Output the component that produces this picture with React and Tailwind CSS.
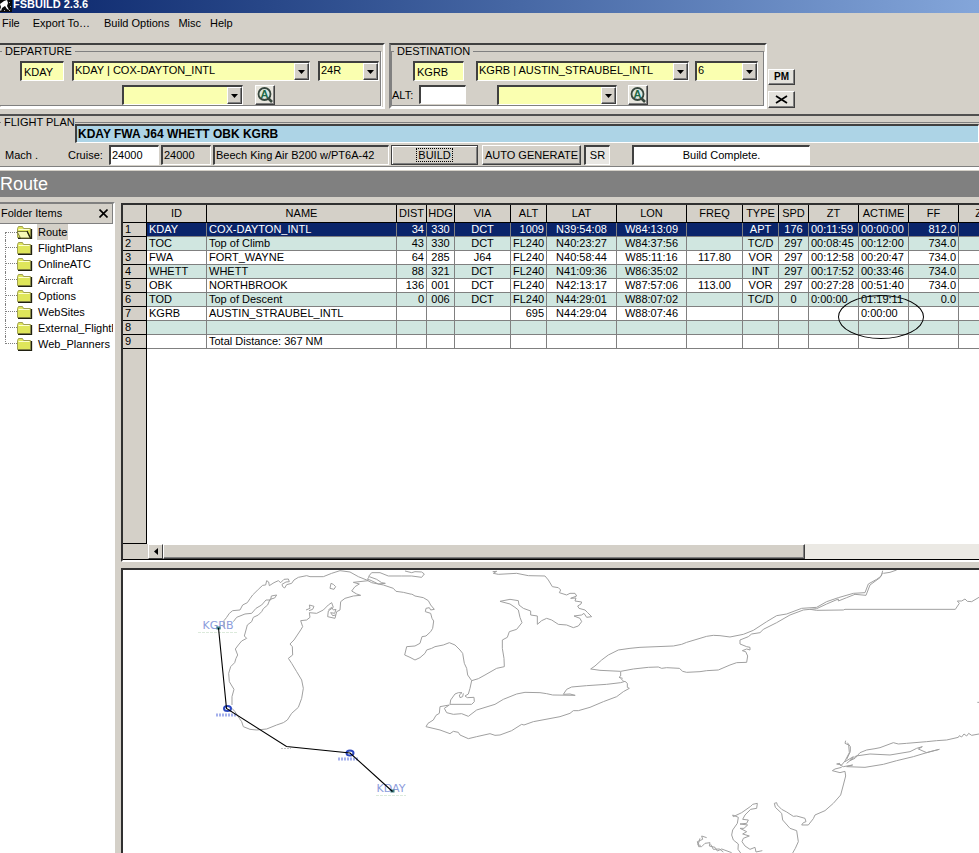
import React from "react";

const SUNKEN =
  "border-t-2 border-l-2 border-b border-r border-t-[#404040] border-l-[#404040] border-b-white border-r-white";
const RAISED =
  "border border-t-white border-l-white border-b-[#404040] border-r-[#404040]";

function Arrow() {
  return (
    <svg width="7" height="4" viewBox="0 0 7 4" aria-hidden="true">
      <path d="M0 0h7L3.5 4z" fill="#000" />
    </svg>
  );
}

function Combo({ label, value = "", className }) {
  return (
    <div className={`relative h-5 shrink-0 ${className}`}>
      <select
        aria-label={label}
        defaultValue={value}
        className={`block h-5 w-full appearance-none bg-[#faffb0] pr-4 pb-0.5 pl-px leading-[13px] ${SUNKEN}`}
      >
        <option value={value}>{value}</option>
      </select>
      <span
        className={`pointer-events-none absolute top-0.5 right-px flex h-[17px] w-[15px] items-center justify-center bg-[#d4d0c8] shadow-[inset_-1px_-1px_0_#808080] ${RAISED}`}
      >
        <Arrow />
      </span>
    </div>
  );
}

function Field({ className, ...rest }) {
  return <input type="text" className={`shrink-0 ${SUNKEN} ${className}`} {...rest} />;
}

function SearchButton({ label }) {
  return (
    <button type="button" aria-label={label} className={`h-5 w-5 shrink-0 bg-[#e8e6de] shadow-[inset_-1px_-1px_0_#808080] ${RAISED}`}>
      <svg width="18" height="18" viewBox="0 0 18 18" aria-hidden="true">
        <circle cx="8.5" cy="8" r="6" fill="#dce8e0" stroke="#38483e" strokeWidth="1.8" />
        <path d="M12.5 12.5l3.5 3.5" stroke="#38483e" strokeWidth="2.6" />
        <text x="8.5" y="12" textAnchor="middle" fontSize="11" fontWeight="700" fill="#1c6a48">A</text>
      </svg>
    </button>
  );
}

function Group({ title, className, children }) {
  return (
    <fieldset
      className={`min-w-0 grow border border-[#808080] shadow-[1px_1px_0_#fff] ${className}`}
    >
      <legend className="ml-0.5 h-[13px] px-[3px] leading-[13px]">{title}</legend>
      {children}
    </fieldset>
  );
}

function TitleBar() {
  return (
    <header className="flex h-[13px] items-start overflow-hidden bg-gradient-to-r from-[#0a246a] to-[#84a6da]">
      <svg width="12" height="13" viewBox="0 0 12 13" aria-hidden="true">
        <path d="M0 0h12v12H0z" fill="#0a0a0a" />
        <path d="M0 4l4-3 3-1 1 3-1 3 2 4-2-1-2-3-3 2-1 3-1-1 1-3z" fill="#fff" />
        <path d="M9 2h1v1H9zM10 6h1v1h-1zM4 10h1v1H4zM9 10h1v1H9z" fill="#aaa" />
      </svg>
      <h1 className="-mt-0.5 pl-px text-[11px] leading-[13px] font-bold whitespace-nowrap text-white">
        FSBUILD 2.3.6
      </h1>
    </header>
  );
}

function MenuBar() {
  return (
    <nav className="flex h-[30px] items-start gap-[13px] pt-1 pl-0.5 leading-[13px]">
      <button type="button">File</button>
      <button type="button">Export To…</button>
      <button type="button" className="ml-px">Build Options</button>
      <button type="button" className="-ml-1">Misc</button>
      <button type="button" className="-ml-1">Help</button>
    </nav>
  );
}

function Airports() {
  return (
    <div className="flex h-[71px] items-start">
      <section className="flex h-[66px] w-[385px] shrink-0 border-t-2 border-r-2 border-b-2 border-t-[#404040] border-r-white border-b-white pr-0.5 pb-px">
        <Group title="DEPARTURE" className="border-l-0">
          <div className="mt-[3px] flex gap-2 pl-5">
            <Field aria-label="Departure airport" defaultValue="KDAY" className="h-5 w-11 bg-[#faffb0] pl-0.5" />
            <Combo label="Departure name" value="KDAY | COX-DAYTON_INTL" className="w-[238px]" />
            <Combo label="Departure runway" value="24R" className="w-[61px]" />
          </div>
          <div className="mt-1 flex gap-3 pl-[122px]">
            <Combo label="Departure procedure" className="w-[121px]" />
            <SearchButton label="Find departure procedure" />
          </div>
        </Group>
      </section>
      <section className="ml-1 flex h-[66px] w-[378px] shrink-0 border-2 border-t-[#404040] border-r-white border-b-white border-l-[#808080] pr-px pb-px">
        <Group title="DESTINATION" className="">
          <div className="mt-[3px] flex pl-[21px]">
            <Field aria-label="Destination airport" defaultValue="KGRB" className="mr-3 h-5 w-[51px] bg-[#faffb0] pl-0.5" />
            <Combo label="Destination name" value="KGRB | AUSTIN_STRAUBEL_INTL" className="mr-1.5 w-[213px]" />
            <Combo label="Destination runway" value="6" className="w-[63px]" />
          </div>
          <div className="mt-1 flex">
            <label htmlFor="alternate" className="w-[27px] shrink-0 leading-5">ALT:</label>
            <Field id="alternate" className="mr-[31px] h-[19px] w-[47px] bg-white" />
            <Combo label="Arrival procedure" className="mr-[11px] w-[120px]" />
            <SearchButton label="Find arrival procedure" />
          </div>
        </Group>
      </section>
      <div className="ml-px flex flex-col gap-1.5 pt-[26px]">
        <button type="button" className={`h-4 w-[27px] bg-[#e4e2dc] text-[10px] leading-3 font-bold shadow-[inset_-1px_-1px_0_#808080] ${RAISED}`}>
          PM
        </button>
        <button type="button" aria-label="Clear" className={`flex h-[17px] w-[27px] items-center justify-center bg-[#e4e2dc] shadow-[inset_-1px_-1px_0_#808080] ${RAISED}`}>
          <svg width="13" height="9" viewBox="0 0 13 9" aria-hidden="true">
            <path d="M1 1l11 7M12 1L1 8" stroke="#000" strokeWidth="1.7" />
          </svg>
        </button>
      </div>
    </div>
  );
}

function FlightPlan() {
  return (
    <section className="border-t-2 border-b-[3px] border-t-[#505050] border-b-white">
      <fieldset className="min-w-0 border-t border-b border-t-[#808080] border-b-[#808080] pb-px">
        <legend className="ml-px h-[13px] w-[74px] pl-[3px] leading-[13px] whitespace-nowrap">FLIGHT PLAN</legend>
        <div className="-mt-[5px] flex pl-[75px]">
          <Field
            aria-label="Route string"
            defaultValue="KDAY FWA J64 WHETT OBK KGRB"
            className="h-[19px] min-w-0 grow bg-[#add4e6] pl-px text-[12px] font-bold"
          />
        </div>
        <div className="mt-0.5 flex h-5 items-center whitespace-nowrap">
          <span className="w-[68px] shrink-0 pl-[5px]">Mach .</span>
          <label htmlFor="cruise" className="w-[41px] shrink-0">Cruise:</label>
          <Field id="cruise" defaultValue="24000" className="h-5 w-[50px] bg-white pb-0.5 pl-px" />
          <output className={`ml-0.5 h-5 w-[50px] shrink-0 pl-px leading-[17px] ${SUNKEN}`}>24000</output>
          <output className={`ml-0.5 h-5 w-[176px] shrink-0 pl-px leading-[17px] ${SUNKEN}`}>
            Beech King Air B200 w/PT6A-42
          </output>
          <button type="button" className="ml-0.5 h-5 w-[87px] shrink-0 border border-[#404040] shadow-[inset_1px_1px_0_#fff,inset_-1px_-1px_0_#808080]">
            <span className="inline-block border border-dotted border-black px-px leading-3">BUILD</span>
          </button>
          <button type="button" className={`ml-1 h-5 w-[99px] shrink-0 shadow-[inset_-1px_-1px_0_#808080] ${RAISED}`}>
            AUTO GENERATE
          </button>
          <button type="button" aria-pressed="true" className={`ml-[3px] h-5 w-[26px] shrink-0 bg-[#e9e7e3] ${SUNKEN}`}>
            SR
          </button>
          <output className={`ml-[22px] h-5 w-[178px] shrink-0 bg-white text-center leading-[17px] ${SUNKEN}`}>
            Build Complete.
          </output>
        </div>
      </fieldset>
    </section>
  );
}

function Folder({ open }) {
  return (
    <svg width="16" height="14" viewBox="0 0 16 14" className="shrink-0" aria-hidden="true">
      <path d="M.5 12.500v-9l1-2h4l1 2h7v9z" fill="#dfe65a" stroke="#a0a050" />
      <path d="M1.500 4.500h11" stroke="#fdffd0" />
      <path d="M1 13.300h13.500V4" fill="none" stroke="#202010" strokeWidth="1.300" />
      {open && (
        <>
          <path d="M0 6.500h10l3 6.500H3.500z" fill="#f6f9b8" stroke="#77773a" />
          <path d="M10 6l3.500 7" stroke="#202010" strokeWidth="1.300" />
        </>
      )}
    </svg>
  );
}

const FOLDERS = ["Route", "FlightPlans", "OnlineATC", "Aircraft", "Options", "WebSites", "External_FlightP", "Web_Planners"];

function Sidebar() {
  return (
    <aside className="flex w-[115px] shrink-0 flex-col border-t-2 border-r-2 border-t-[#808080] border-r-white">
      <div className="flex h-5 items-center justify-between border-r border-b border-[#808080] pr-1 pl-px">
        <h2>Folder Items</h2>
        <button type="button" aria-label="Close">
          <svg width="9" height="9" viewBox="0 0 9 9" aria-hidden="true">
            <path d="M.5 .5l8 8M8.500 .5l-8 8" stroke="#000" strokeWidth="1.6" />
          </svg>
        </button>
      </div>
      <ul className="grow overflow-hidden bg-white">
        {FOLDERS.map((name, i) => (
          <li key={name} className="flex h-4 items-center">
            <span className="flex h-4 w-[5px] shrink-0" />
            <span className={`w-3 shrink-0 border-l border-dotted border-[#808080] ${i === 0 ? "h-2 self-end" : i === 7 ? "h-2 self-start" : "h-4"}`}>
              <span className={`block border-b border-dotted border-[#808080] ${i === 0 ? "h-px" : "h-2"}`} />
            </span>
            <Folder open={i === 0} />
            <a href="#route" className={`ml-1 px-px leading-4 whitespace-nowrap ${i === 0 ? "bg-[#d4d0c8]" : ""}`}>
              {name}
            </a>
          </li>
        ))}
      </ul>
    </aside>
  );
}

const HEADS = ["", "ID", "NAME", "DIST", "HDG", "VIA", "ALT", "LAT", "LON", "FREQ", "TYPE", "SPD", "ZT", "ACTIME", "FF", "Z"];
const WIDTHS = [
  "w-[24px]", "w-[60px]", "w-[190px]", "w-[30px]", "w-[28px]", "w-[56px]", "w-[36px]", "w-[70px]",
  "w-[70px]", "w-[56px]", "w-[36px]", "w-[30px]", "w-[50px]", "w-[50px]", "w-[50px]", "w-[40px]",
];
const ALIGN = [
  "text-left", "text-left", "text-left", "text-right", "text-center", "text-center", "text-right", "text-center",
  "text-center", "text-center", "text-center", "text-center", "text-left", "text-left", "text-right", "text-right",
];
const ROWS = [
  ["KDAY", "COX-DAYTON_INTL", "34", "330", "DCT", "1009", "N39:54:08", "W84:13:09", "", "APT", "176", "00:11:59", "00:00:00", "812.0", ""],
  ["TOC", "Top of Climb", "43", "330", "DCT", "FL240", "N40:23:27", "W84:37:56", "", "TC/D", "297", "00:08:45", "00:12:00", "734.0", ""],
  ["FWA", "FORT_WAYNE", "64", "285", "J64", "FL240", "N40:58:44", "W85:11:16", "117.80", "VOR", "297", "00:12:58", "00:20:47", "734.0", ""],
  ["WHETT", "WHETT", "88", "321", "DCT", "FL240", "N41:09:36", "W86:35:02", "", "INT", "297", "00:17:52", "00:33:46", "734.0", ""],
  ["OBK", "NORTHBROOK", "136", "001", "DCT", "FL240", "N42:13:17", "W87:57:06", "113.00", "VOR", "297", "00:27:28", "00:51:40", "734.0", ""],
  ["TOD", "Top of Descent", "0", "006", "DCT", "FL240", "N44:29:01", "W88:07:02", "", "TC/D", "0", "0:00:00", "01:19:11", "0.0", ""],
  ["KGRB", "AUSTIN_STRAUBEL_INTL", "", "", "", "695", "N44:29:04", "W88:07:46", "", "", "", "", "0:00:00", "", ""],
  ["", "", "", "", "", "", "", "", "", "", "", "", "", "", ""],
  ["", "Total Distance: 367 NM", "", "", "", "", "", "", "", "", "", "", "", "", ""],
];

function rowColor(i) {
  if (i === 0) return "bg-[#0a246a] text-white";
  return i % 2 ? "bg-[#d0e6e0]" : "bg-white";
}

function RouteGrid() {
  return (
    <section className="relative flex h-[359px] shrink-0 flex-col overflow-hidden border-t-2 border-b-2 border-l-2 border-t-[#303030] border-b-white border-l-[#303030] bg-white">
      <div className="flex grow flex-col">
        <table className="w-[876px] table-fixed border-separate border-spacing-0">
          <thead>
            <tr>
              {HEADS.map((h, i) => (
                <th key={i} scope="col" className={`h-[18px] overflow-hidden border-r border-b border-black bg-[#d4d0c8] text-center leading-[17px] font-normal whitespace-nowrap ${WIDTHS[i]}`}>
                  {h}
                </th>
              ))}
            </tr>
          </thead>
          <tbody>
            {ROWS.map((row, i) => (
              <tr key={i} className={rowColor(i)}>
                <th scope="row" className="h-3.5 border-r border-b border-black bg-[#d4d0c8] pl-0.5 text-left leading-[13px] font-normal text-black">
                  {i + 1}
                </th>
                {row.map((cell, j) => (
                  <td key={j} className={`h-3.5 border-r border-b border-[#808080] px-0.5 leading-[13px] whitespace-nowrap ${ALIGN[j + 1]}`}>
                    {cell}
                  </td>
                ))}
              </tr>
            ))}
          </tbody>
        </table>
        <div className="w-6 grow border-r border-b border-black bg-[#d4d0c8]" />
      </div>
      <div className="flex h-4 shrink-0 border-b border-black bg-[#ebe9e4]">
        <div className="w-[25px] shrink-0 bg-[#d4d0c8]" />
        <button type="button" aria-label="Scroll left" className={`flex w-[15px] shrink-0 items-center justify-center bg-[#d4d0c8] ${RAISED}`}>
          <svg width="4" height="7" viewBox="0 0 4 7" aria-hidden="true">
            <path d="M4 0v7L0 3.500z" fill="#000" />
          </svg>
        </button>
        <div className={`w-3/4 bg-[#d4d0c8] shadow-[inset_-1px_-1px_0_#808080] ${RAISED}`} />
      </div>
      <div className="absolute top-[90px] left-[715px] h-11 w-[86px] rounded-[50%] border border-black" />
    </section>
  );
}

const WEST = [
  "M343 290L342 272 350 262 358 250 368 242 390 240 398 225 412 218 420 206 428 195 445 178 458 166 467 165 470 152 476 156 478 167 492 158 505 152 512 158 522 148 535 147 538 155 528 156 516 163 518 170 524 174 530 164 545 160 552 150 565 142 590 137 600 140 640 140 665 130 690 122 720 126 745 140 770 150 785 158 820 165 850 175 858 184 880 187 905 193",
  "M370 275L380 262 405 252 425 250 438 235 455 225 468 210 482 210 484 198 500 195 494 204 480 208 473 225 460 236 455 245 445 255 430 262 425 275 412 285 408 300 403 318 410 325 395 333 385 345 376 357 383 375 378 385 374 398 362 410 356 430 358 455 364 465 372 478 366 500 366 525",
  "M366 535L375 545 388 565 395 575 400 590 420 598 440 600 470 597 500 585 520 578 532 570 545 550 565 532 575 505 580 475 575 450 560 425 545 400 535 385 548 375 547 350 540 342 552 330 562 315 572 300 578 290 572 272 590 270 600 262 598 248 620 250 640 240 655 225 665 218 670 232 655 243 653 260 675 265 680 245 690 240 692 215 705 205 730 198 752 196 740 192 725 183 735 170 748 162 730 157 775 152",
  "M660 175L663 160 670 163 677 170 672 178zM588 240L600 235 598 225 612 229 608 238 597 242",
  "M655 240L665 232 670 240 678 238 674 250 662 248 668 257 678 255",
  "M775 140L785 128 810 128 835 138 875 138 905 138 935 142 943 132 935 126 915 125 905 128 885 123M778 140L800 148 815 158 826 160 805 162 780 150 772 148z",
];

const CENTRE = [
  "M35 102L45 108 70 113 85 122 92 135 103 148 92 150 88 143 78 145 76 155 92 160 96 175 101 183 98 205 92 215 78 228 66 230 60 250 45 258 20 260 14 285 30 292 45 300 60 293 75 280 80 270 95 265 105 260 130 255 148 248 165 255 180 270 188 280 193 310 200 325 203 345 215 362",
  "M278 35L290 34 280 40 295 43 350 40 385 47 435 48 445 60 457 80 475 83 482 90 478 98 500 105 510 100 525 100 530 108 512 115 528 114 525 123 545 126 543 132 533 138 537 145 555 150 563 158 575 170 560 172 552 160 545 165 522 168 540 175 545 185 535 198 520 203 500 195 475 193 455 180 440 175 425 182 412 193 412 168 392 165 392 153 370 145 357 135 355 122 330 118 300 124 330 132 345 142 355 150 360 172 366 188 350 208 328 215 322 232 307 240 307 265 312 295 313 320 290 325 255 345 235 356 215 362 210 385 205 402 195 408 202 413 222 412 223 425 215 433 150 433",
  "M150 433L152 420 165 402 175 398 186 398 178 405 180 413 188 410 190 400",
  "M148 435L133 445 140 458 160 463 185 461 205 469 230 450 285 433 310 418 350 402 375 397 420 398 440 401 458 405 526 406M525 406L510 402 490 403 500 388 515 381 560 377 620 373 662 368 675 364 682 370 682 382 688 385 670 395 650 410 610 425 570 442 535 452 520 452 510 460 480 470 400 485 372 495 365 493 335 512 300 525 285 526 270 521 230 530 205 536 180 525 175 517 160 514 150 521 120 510 78 500 84 490 100 480 108 466 118 460 120 440 148 435",
  "M662 335L662 348 657 352 668 355M662 355L672 365",
  "M572 327L585 318 605 300 625 285 655 270 690 265 720 262 820 258 845 253 860 247 900 235M572 327L600 331 662 334 700 327 745 322 775 321 785 325 800 323 838 325 848 334 860 337 900 335",
];

const EAST = [
  "M60 325L80 319 100 316 120 317 150 321 190 313 220 301 260 275 290 257 320 252 365 235 410 232 440 215 475 203 520 190 555 188 565 162 590 148 604 138 608 122M610 130L630 127 650 120",
  "M60 425L80 422 115 420 150 405 170 398 200 397 203 378 197 365 187 362 200 357 210 360 210 352 200 350 180 342 180 330 205 320 215 312 240 308 250 298 290 278 330 255 370 240 410 236 440 222 475 207 475 213 500 203 525 193 558 196 570 165 600 143 608 128",
  "M390 238L410 241 490 240 495 238 826 238 838 220 832 213 845 213 855 207 862 214 875 215 897 202",
  "M497 632L495 640 506 645 508 668 495 693 485 705 470 702 480 700M502 638L511 650 511 665 500 688",
  "M495 695L520 680 510 692 525 685 540 668 560 660 585 656 600 653 640 638 655 642 680 640 740 635 770 632 800 630 835 622 838 617 845 621 852 612 860 618 866 610 875 616 897 612",
  "M500 700L510 692 528 678 570 672 630 675 690 665 710 655 727 650 715 657 740 668 778 658 750 665 700 680 650 692 610 703 555 712 500 710 518 705 490 710 480 705",
  "M485 712L465 717 457 722 480 728 495 724 497 738 490 765 482 795 460 820 435 842 405 855 400 866 385 885 365 885 370 878 378 875 375 865 350 858 340 859 320 846 305 838 292 825 290 818 283 820 286 832 305 850 308 870 330 895 350 902 355 935 346 955 338 969",
  "M232 820L218 823 212 829 185 848 160 860 158 855 175 862 172 880 158 900 155 915 160 930 175 942 174 958 182 969M232 820L230 835 212 838 195 855 188 868 205 870 200 880 180 882 203 885 192 895 180 895 200 905 188 912 208 918 190 925 186 935 195 948 210 958 225 952 228 966 247 962",
  "M80 923L65 918 68 928 52 935 56 950 65 950 75 940 90 938 88 948 105 952 112 963 125 957 155 968M60 925L54 945 62 946M92 943L100 958 118 957 130 966",
  "M892 517h5",
];

function Coast({ paths, x, y }) {
  return (
    <g transform={`translate(${x} ${y}) scale(0.33333)`} fill="none" stroke="#a0a0a0" strokeWidth="3" strokeLinejoin="round">
      {paths.map((d) => (
        <path key={d} d={d} />
      ))}
    </g>
  );
}

function RouteMap() {
  return (
    <section className="mt-1.5 min-h-[285px] grow overflow-hidden border-t-2 border-l-2 border-[#303030] bg-white">
      <svg width="1200" height="283" role="img" aria-label="Route map">
        <g transform="translate(-123 -570)">
          <Coast paths={WEST} x={110} y={530} />
          <Coast paths={CENTRE} x={400} y={560} />
          <Coast paths={EAST} x={680} y={530} />
          <g fill="#8c9cdc" fontSize="11" textAnchor="middle" fontFamily="DejaVu Sans, sans-serif">
            <text x="218" y="629">KGRB</text>
            <text x="391" y="792">KDAY</text>
          </g>
          <path d="M198 632.500h40M376 795.500h30" stroke="#dceadc" strokeDasharray="3 1" />
          <path d="M216 715h20M338 759h20" stroke="#a4b0ec" strokeWidth="3" strokeDasharray="2 1" />
          <path d="M281 748.500h10" stroke="#c4c4c4" strokeDasharray="2 1" />
          <g fill="#fff" stroke="#2c48c0" strokeWidth="2">
            <ellipse cx="227.500" cy="708.500" rx="3.500" ry="2.500" />
            <ellipse cx="350" cy="753" rx="3.500" ry="2.500" />
          </g>
          <path d="M216.500 626.500h4v3h-4zM390.500 789.500h4v3h-4z" fill="#3c7c80" />
          <path d="M218.500 628L226.500 708.500 286.500 746.500 350 753 392.500 791.500" fill="none" stroke="#000" strokeWidth="1.100" />
        </g>
      </svg>
    </section>
  );
}

export default function App() {
  return (
    <div className="flex min-h-screen flex-col overflow-hidden bg-[#d4d0c8] font-['Liberation_Sans',Arial,sans-serif] text-[11px] leading-[13px] text-black">
      <TitleBar />
      <MenuBar />
      <Airports />
      <FlightPlan />
      <div className="mt-px flex h-[26px] items-center bg-[#808080] text-[18px] leading-6 text-white">
        <h2>Route</h2>
      </div>
      <main className="mt-[5px] flex grow">
        <Sidebar />
        <div className="ml-1.5 flex min-w-0 grow flex-col pt-px">
          <RouteGrid />
          <RouteMap />
        </div>
      </main>
    </div>
  );
}
